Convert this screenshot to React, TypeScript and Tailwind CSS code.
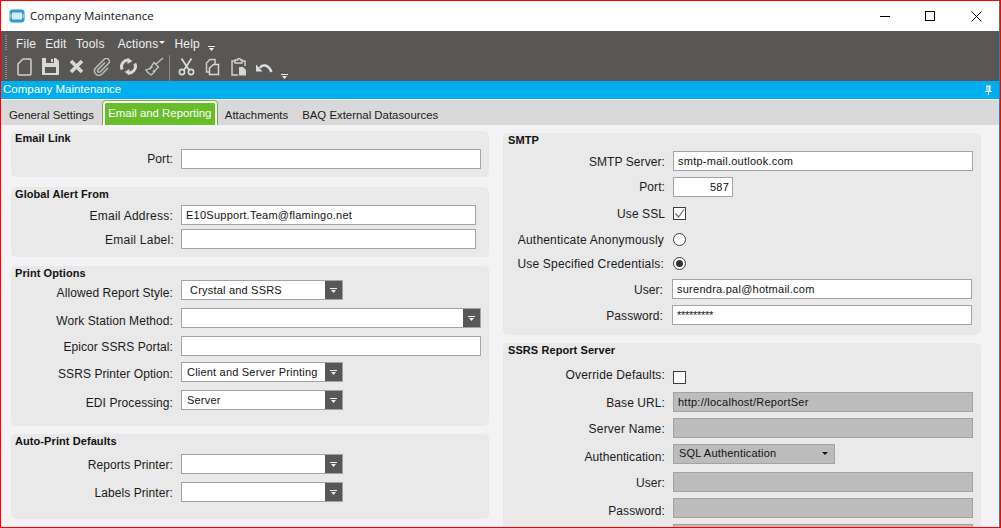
import React from "react";

const Arrow = () => (
  <svg width="7" height="5" viewBox="0 0 7 5" className="block"><path d="M0 0h7v1H0z M1 2h5L3.5 5z" fill="#f2f2f2" /></svg>
);

function Input({ w, value, disabled, right, left, stars }: { w: string; value?: string; disabled?: boolean; right?: boolean; left?: string; stars?: boolean }) {
  return (
    <div className={`h-[20px] ${w} ${left ?? ""} shrink-0 border border-[#a3a3a3] ${disabled ? "bg-[#bcbcbc]" : "bg-white"} pl-[4px] ${right ? "pr-[3px] text-right" : ""} text-[11px] leading-[18px] ${stars ? "tracking-[-0.28px]" : "tracking-[0.25px]"} overflow-hidden whitespace-nowrap text-[#111]`}>
      {value}
    </div>
  );
}

function Select({ w, value, tx = "pl-[5px]" }: { w: string; value?: string; tx?: string }) {
  return (
    <div className={`flex h-[20px] ${w} shrink-0 border border-[#a3a3a3] bg-white text-[11px] leading-[18px] tracking-[0.2px] text-[#111]`}>
      <div className={`flex-1 ${tx} overflow-hidden whitespace-nowrap`}>{value}</div>
      <div className="flex w-[17px] items-center justify-center bg-[#595755]"><Arrow /></div>
    </div>
  );
}

function Row({ label, children, mt, lpad = "pt-[2px]", pr = "pr-0", tr = "tracking-[0.08px]" }: { label: string; children: React.ReactNode; mt: string; lpad?: string; pr?: string; tr?: string }) {
  return (
    <div className={`flex h-[20px] ${mt}`}>
      <div className={`w-[162px] ${lpad} ${pr} ${tr} whitespace-nowrap text-right text-[12px] leading-[18px] text-[#1a1a1a]`}>{label}</div>
      <div className="ml-[8px] flex">{children}</div>
    </div>
  );
}

function Panel({ title, h, mt, children, pl = "pl-[4px]" }: { title: string; h: string; mt: string; children: React.ReactNode; pl?: string }) {
  return (
    <section className={`${h} ${mt} rounded-[5px] bg-[#e9e9e9]`}>
      <h2 className={`h-[14px] ${pl} text-[11px] font-bold leading-[14px] tracking-[0.08px] text-[#111]`}>{title}</h2>
      {children}
    </section>
  );
}

const Check = ({ checked, mt }: { checked?: boolean; mt: string }) => (
  <div className={`h-[13px] w-[13px] ${mt} border border-[#3c3c3c] bg-white`}>
    {checked && <svg width="11" height="11" viewBox="0 0 11 11"><path d="M1.5 5.5 4.5 9 10 1.5" fill="none" stroke="#6a6a6a" strokeWidth="1.2" /></svg>}
  </div>
);

const Radio = ({ on }: { on?: boolean }) => (
  <div className="mt-[4px] flex h-[13px] w-[13px] items-center justify-center rounded-full border border-[#3c3c3c] bg-white">
    {on && <div className="h-[7px] w-[7px] rounded-full bg-[#333]" />}
  </div>
);

function Grip({ h, mt }: { h: string; mt: string }) {
  return <div className={`ml-[4px] w-[2px] ${h} ${mt} bg-[repeating-linear-gradient(to_bottom,#8d8b89_0,#8d8b89_1px,transparent_1px,transparent_2px)]`} />;
}

function Toolbar() {
  return (
    <div className="flex h-[30px] items-start">
      <Grip h="h-[23px]" mt="mt-[5px]" />
      <svg className="ml-[10px] mt-[7px]" width="15" height="18" viewBox="0 0 15 18"><path d="M6 1h7a1 1 0 0 1 1 1v14a1 1 0 0 1-1 1H2a1 1 0 0 1-1-1V6z" fill="none" stroke="#cfcfcd" strokeWidth="1.5" /></svg>
      <svg className="ml-[10px] mt-[7px]" width="17" height="17" viewBox="0 0 17 17"><path fillRule="evenodd" d="M0 1.5A1 1 0 0 1 1 0h13l3 3v13a1 1 0 0 1-1 1H1a1 1 0 0 1-1-1zM4 0v5h8V0zM3 9v6h11V9z" fill="#d8d8d6" /><path d="M9 1h2v3H9z" fill="#d8d8d6" /></svg>
      <svg className="ml-[10px] mt-[8px]" width="15" height="15" viewBox="0 0 15 15"><path d="M2 2 13 13M13 2 2 13" fill="none" stroke="#d8d8d6" strokeWidth="3.6" /></svg>
      <svg className="ml-[9px] mt-[7px]" width="18" height="18" viewBox="0 0 18 18"><path d="M12 4.5 5 11.5a1.6 1.6 0 0 0 2.3 2.3L15.5 5.5a3 3 0 0 0-4.3-4.2L2.6 10a4.4 4.4 0 0 0 6.2 6.2L15 10" fill="none" stroke="#bdbdbb" strokeWidth="1.5" /></svg>
      <svg className="ml-[9px] mt-[7px]" width="17" height="17" viewBox="0 0 17 17"><path d="M2.2 11.5A6.6 6.6 0 0 1 9.5 2.2M14.8 5.5A6.6 6.6 0 0 1 7.5 14.8" fill="none" stroke="#d8d8d6" strokeWidth="3" /><path d="M7.5 0l5 3-5 3zM9.5 17l-5-3 5-3z" fill="#d8d8d6" /></svg>
      <svg className="ml-[8px] mt-[6px]" width="19" height="19" viewBox="0 0 19 19"><path d="M18 1 11 7M9 5.5l4.5 4.5-2.5 2.5c-1 2-3 4-5 5.5-1-.5-4-2.5-5-5 2 0 5-2 5.500-4z M5 12 7.500 9.500M8 15l1.500-2" fill="none" stroke="#c4c4c2" strokeWidth="1.3" /></svg>
      <div className="ml-[5px] mt-[4px] h-[26px] w-px bg-[#8c8a88]" />
      <svg className="ml-[8px] mt-[7px]" width="17" height="18" viewBox="0 0 17 18"><path d="M3.500 0.500 11 12M13.500 0.500 6 12" fill="none" stroke="#dcdcda" strokeWidth="1.700" /><circle cx="4" cy="14" r="2.600" fill="none" stroke="#dcdcda" strokeWidth="1.600" /><circle cx="13" cy="14" r="2.600" fill="none" stroke="#dcdcda" strokeWidth="1.600" /></svg>
      <svg className="ml-[10px] mt-[7px]" width="15" height="18" viewBox="0 0 15 18"><path d="M4 14H1.500V5L5 1.500h5V6" fill="none" stroke="#cfcfcd" strokeWidth="1.500" /><path d="M8.500 6.500H13.500V16.500H4.500V10z" fill="none" stroke="#d8d8d6" strokeWidth="1.500" /></svg>
      <svg className="ml-[11px] mt-[7px]" width="16" height="18" viewBox="0 0 16 18"><path d="M4 3H1v14h6M11 3h3v5M4 2h2.500a1.500 1.500 0 0 1 3 0H11v3H4z" fill="none" stroke="#d4d4d2" strokeWidth="1.400" /><path d="M8 9h4l3 3v5.500H8z" fill="#d4d4d2" /></svg>
      <svg className="ml-[9px] mt-[11px]" width="17" height="12" viewBox="0 0 17 12"><path d="M4 6C6 2.500 12 1.500 15.500 10" fill="none" stroke="#dedede" strokeWidth="2.400" /><path d="M0 2.500v7h6.500z" fill="#dedede" /></svg>
      <div className="ml-[8px] mt-[23px]"><Arrow /></div>
    </div>
  );
}

export default function App() {
  return (
    <div className="h-[528px] w-[1001px] overflow-hidden border border-[#ff0000] bg-white font-['Liberation_Sans',Arial,sans-serif]">
      <div className="flex h-[526px] w-[999px] flex-col overflow-hidden border-r border-r-[#2f7fb5]">
        <header className="flex h-[30px] shrink-0 items-center bg-white">
          <svg className="ml-[8px]" width="16" height="14" viewBox="0 0 16 14">
            <rect x="0.500" y="0.500" width="15" height="13" rx="3" fill="#2f9ad6" />
            <rect x="3" y="3.500" width="10" height="7" fill="#d5ecf8" />
            <rect x="0.500" y="5" width="2" height="4" fill="#8ccbec" />
            <rect x="13.500" y="5" width="2" height="4" fill="#8ccbec" />
          </svg>
          <span className="ml-[5px] font-['Open_Sans',sans-serif] text-[11.5px] text-[#111]">Company Maintenance</span>
          <svg className="ml-auto" width="11" height="11" viewBox="0 0 11 11"><path d="M0 5.500h10" stroke="#000" /></svg>
          <svg className="ml-[34px]" width="11" height="11" viewBox="0 0 11 11"><rect x="0.500" y="0.500" width="9" height="9" fill="none" stroke="#000" /></svg>
          <svg className="ml-[35px] mr-[17px]" width="11" height="11" viewBox="0 0 11 11"><path d="M0.500 0.500 10.500 10.500M10.500 0.500 0.500 10.500" stroke="#000" /></svg>
        </header>

        <div className="h-[50px] shrink-0 bg-[#595755]">
          <div className="flex h-[20px] items-start">
            <Grip h="h-[15px]" mt="mt-[4px]" />
            <nav className="ml-[9px] mt-[5px] flex items-center text-[12px] leading-[16px] tracking-[0.2px] text-[#f0f0f0]">
              <span>File</span>
              <span className="ml-[9px]">Edit</span>
              <span className="ml-[9px]">Tools</span>
              <span className="ml-[13px]">Actions</span>
              <svg className="mb-[3px] ml-[1px]" width="6" height="3" viewBox="0 0 6 3"><path d="M0 0h6L3 3z" fill="#f0f0f0" /></svg>
              <span className="ml-[9px]">Help</span>
              <div className="ml-[8px] mt-[9px]"><Arrow /></div>
            </nav>
          </div>
          <Toolbar />
        </div>

        <div className="flex h-[18px] shrink-0 items-center justify-between bg-[#00aeef] pl-[2px] pr-[6px] text-[11.5px] text-white">
          <span>Company Maintenance</span>
          <svg width="9" height="10" viewBox="0 0 9 10"><path d="M2 .5h5v1H6.500V6H8v1H5v3H4V7H1V6h1.500V1.500H2z M3.500 1.500V6h1V1.500z" fill="#fff" fillRule="evenodd" /></svg>
        </div>

        <div className="mt-[1px] flex h-[25px] shrink-0 items-end bg-[#d9d9d9] text-[11.4px] text-[#1a1a1a]">
          <span className="mb-[1px] ml-[8px]">General Settings</span>
          <span className="ml-[9px] flex h-[24px] w-[114px] items-start justify-center rounded-t-[3px] border-x-2 border-t-2 border-white bg-[#69bd2b] pt-[2px] text-white outline outline-[#69bd2b]">Email and Reporting</span>
          <span className="mb-[1px] ml-[8px]">Attachments</span>
          <span className="mb-[1px] ml-[14px]">BAQ External Datasources</span>
        </div>

        <main className="flex flex-1 overflow-hidden bg-[#f3f3f5] pl-[10px]">
          <div className="mt-[6px] w-[478px] shrink-0">
            <Panel title="Email Link" h="h-[46px]" mt="mt-0">
              <Row label="Port:" mt="mt-[4px]" lpad="pt-px"><Input w="w-[300px]" /></Row>
            </Panel>
            <Panel title="Global Alert From" h="h-[70px]" mt="mt-[10px]">
              <Row label="Email Address:" mt="mt-[4px]" tr="tracking-[0.25px]"><Input w="w-[295px]" value="E10Support.Team@flamingo.net" /></Row>
              <Row label="Email Label:" mt="mt-[4px]" pr="translate-x-px" tr="tracking-[0.25px]"><Input w="w-[295px]" /></Row>
            </Panel>
            <Panel title="Print Options" h="h-[160px]" mt="mt-[9px]">
              <Row label="Allowed Report Style:" mt="mt-0" lpad="pt-[4px]"><Select w="w-[162px]" value="Crystal and SSRS" tx="pl-[8px]" /></Row>
              <Row label="Work Station Method:" mt="mt-[8px]" lpad="pt-[4px]"><Select w="w-[300px]" /></Row>
              <Row label="Epicor SSRS Portal:" mt="mt-[8px]" lpad="pt-[2px]"><Input w="w-[300px]" /></Row>
              <Row label="SSRS Printer Option:" mt="mt-[6px]" lpad="pt-[3px]"><Select w="w-[162px]" value="Client and Server Printing" /></Row>
              <Row label="EDI Processing:" mt="mt-[8px]" lpad="pt-[4px]"><Select w="w-[162px]" value="Server" /></Row>
            </Panel>
            <Panel title="Auto-Print Defaults" h="h-[85px]" mt="mt-[8px]">
              <Row label="Reports Printer:" mt="mt-[6px]" lpad="pt-[2px]"><Select w="w-[162px]" /></Row>
              <Row label="Labels Printer:" mt="mt-[8px]" lpad="pt-[2px]"><Select w="w-[162px]" /></Row>
            </Panel>
          </div>

          <div className="ml-[14px] mt-[8px] w-[478px] shrink-0">
            <Panel title="SMTP" h="h-[202px]" mt="mt-0" pl="pl-[5px]">
              <Row label="SMTP Server:" mt="mt-[4px]" lpad="pt-[2px]"><Input w="w-[300px]" value="smtp-mail.outlook.com" /></Row>
              <Row label="Port:" mt="mt-[6px]" lpad="pt-px"><Input w="w-[60px]" value="587" right /></Row>
              <Row label="Use SSL" mt="mt-[7px]" lpad="pt-px"><Check checked mt="mt-[3px]" /></Row>
              <Row label="Authenticate Anonymously" mt="mt-[5px]" lpad="pt-[2px]" pr="pr-px" tr="tracking-[0.2px]"><Radio /></Row>
              <Row label="Use Specified Credentials:" mt="mt-[4px]" lpad="pt-[2px]" pr="pr-px" tr="tracking-[0.2px]"><Radio on /></Row>
              <Row label="User:" mt="mt-[6px]" lpad="pt-[2px]" pr="pr-[2px]"><Input w="w-[300px]" left="-ml-px" value="surendra.pal@hotmail.com" /></Row>
              <Row label="Password:" mt="mt-[6px]" lpad="pt-[2px]" pr="pr-[2px]"><Input w="w-[300px]" left="-ml-px" value="*********" stars /></Row>
            </Panel>
            <Panel title="SSRS Report Server" h="h-[200px]" mt="mt-[8px]" pl="pl-[5px]">
              <Row label="Override Defaults:" mt="mt-[7px]" lpad="pt-[2px]" tr="tracking-[0.15px]"><Check mt="mt-[7px]" /></Row>
              <Row label="Base URL:" mt="mt-[8px]" lpad="pt-[2px]"><Input w="w-[300px]" value="http://localhost/ReportSer" disabled /></Row>
              <Row label="Server Name:" mt="mt-[6px]" lpad="pt-[2px]" tr="tracking-[0.2px]"><Input w="w-[300px]" disabled /></Row>
              <Row label="Authentication:" mt="mt-[6px]" lpad="pt-[4px]">
                <div className="flex h-[20px] w-[162px] items-center justify-between border border-[#a3a3a3] bg-[#bcbcbc] pb-[1px] pl-[5px] pr-[6px] text-[11px] tracking-[0.2px] text-[#111]">
                  <span>SQL Authentication</span>
                  <svg width="6" height="3" viewBox="0 0 6 3"><path d="M0 0h6L3 3z" fill="#111" /></svg>
                </div>
              </Row>
              <Row label="User:" mt="mt-[8px]" lpad="pt-[2px]"><Input w="w-[300px]" disabled /></Row>
              <Row label="Password:" mt="mt-[6px]" lpad="pt-[4px]"><Input w="w-[300px]" disabled /></Row>
              <Row label="" mt="mt-[6px]"><Input w="w-[300px]" disabled /></Row>
            </Panel>
          </div>
        </main>
      </div>
    </div>
  );
}
